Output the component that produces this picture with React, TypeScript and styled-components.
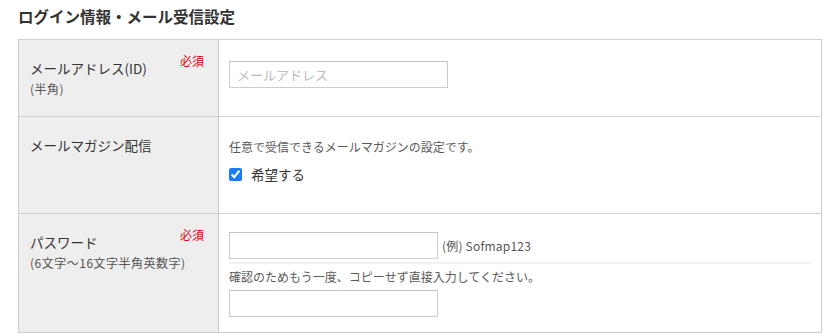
import React from 'react'
import styled, { createGlobalStyle } from 'styled-components'

const GlobalStyle = createGlobalStyle`
  body {
    margin: 0;
    background: #ffffff;
    font-family: "Noto Sans CJK JP", "Liberation Sans", sans-serif;
    color: #333333;
  }
`

const Page = styled.div`
  padding: 4px 18px 0 18px;
`

const Title = styled.h2`
  margin: 0 0 11px 0;
  font-size: 15.5px;
  line-height: 24px;
  font-weight: 700;
  color: #333333;
`

const Table = styled.div`
  border: 1px solid #cccccc;
  border-top-color: #d4d4d4;
`

const Row = styled.div`
  display: grid;
  grid-template-columns: 200px 1fr;
  & + & {
    border-top: 1px solid #d0d0d0;
  }
`

const LabelCell = styled.div`
  position: relative;
  background: #eeeeee;
  border-right: 1px solid #cccccc;
  padding: 16px 12px 16px 11px;
`

const LabelText = styled.div`
  font-size: 13.5px;
  line-height: 24px;
  color: #333333;
`

const SubLabel = styled.div`
  font-size: 12px;
  line-height: 18px;
  letter-spacing: 0.5px;
  color: #555555;
`

const Required = styled.span`
  position: absolute;
  top: 14px;
  right: 14px;
  font-size: 12px;
  line-height: 14px;
  color: #e50012;
`

const FieldCell = styled.div<{ $pad: string }>`
  padding: ${(p) => p.$pad};
`

const TextInput = styled.input<{ $w: number }>`
  box-sizing: border-box;
  width: ${(p) => p.$w}px;
  height: 27px;
  margin: 0;
  padding: 0 7px;
  border: 1px solid #cccccc;
  border-top-color: #c4c4c4;
  border-radius: 0;
  font-family: inherit;
  font-size: 13px;
  color: #333333;
  vertical-align: baseline;
  &::placeholder {
    color: #bbbbbb;
  }
`

const Note = styled.div<{ $gap?: number }>`
  font-size: 12px;
  line-height: 18px;
  color: #5a5a5a;
  margin: ${(p) => p.$gap ?? 0}px 0 0 0;
`

const Example = styled.span`
  font-size: 12px;
  letter-spacing: 0.2px;
  color: #555555;
  margin-left: 4px;
`

const CheckRow = styled.label`
  display: flex;
  align-items: center;
  height: 24px;
  margin-top: 6px;
  font-size: 13.5px;
  color: #333333;
`

const Check = styled.input`
  width: 13px;
  height: 13px;
  margin: 0 9px 0 0;
  accent-color: #1a7cf5;
`

const Divider = styled.div`
  height: 2px;
  background: #f2f2f2;
  margin-top: 4px;
`

const InputLine = styled.div<{ $gap?: number }>`
  line-height: 27px;
  height: 27px;
  margin-top: ${(p) => p.$gap ?? 0}px;
`

export default function App() {
  return (
    <>
      <GlobalStyle />
      <Page>
        <Title>ログイン情報・メール受信設定</Title>
        <Table>
          <Row>
            <LabelCell>
              <LabelText>メールアドレス(ID)</LabelText>
              <SubLabel>(半角)</SubLabel>
              <Required>必須</Required>
            </LabelCell>
            <FieldCell $pad="21px 10px 28px 10px">
              <TextInput $w={219} type="text" placeholder="メールアドレス" />
            </FieldCell>
          </Row>
          <Row>
            <LabelCell>
              <LabelText>メールマガジン配信</LabelText>
            </LabelCell>
            <FieldCell $pad="21px 10px 27px 10px">
              <Note>任意で受信できるメールマガジンの設定です。</Note>
              <CheckRow>
                <Check type="checkbox" defaultChecked />
                希望する
              </CheckRow>
            </FieldCell>
          </Row>
          <Row>
            <LabelCell>
              <LabelText>パスワード</LabelText>
              <SubLabel>(6文字〜16文字半角英数字)</SubLabel>
              <Required>必須</Required>
            </LabelCell>
            <FieldCell $pad="17px 10px 16px 10px">
              <InputLine>
                <TextInput $w={209} type="password" />
                <Example>(例) Sofmap123</Example>
              </InputLine>
              <Divider />
              <Note $gap={4}>確認のためもう一度、コピーせず直接入力してください。</Note>
              <InputLine $gap={3}>
                <TextInput $w={209} type="password" />
              </InputLine>
            </FieldCell>
          </Row>
        </Table>
      </Page>
    </>
  )
}
